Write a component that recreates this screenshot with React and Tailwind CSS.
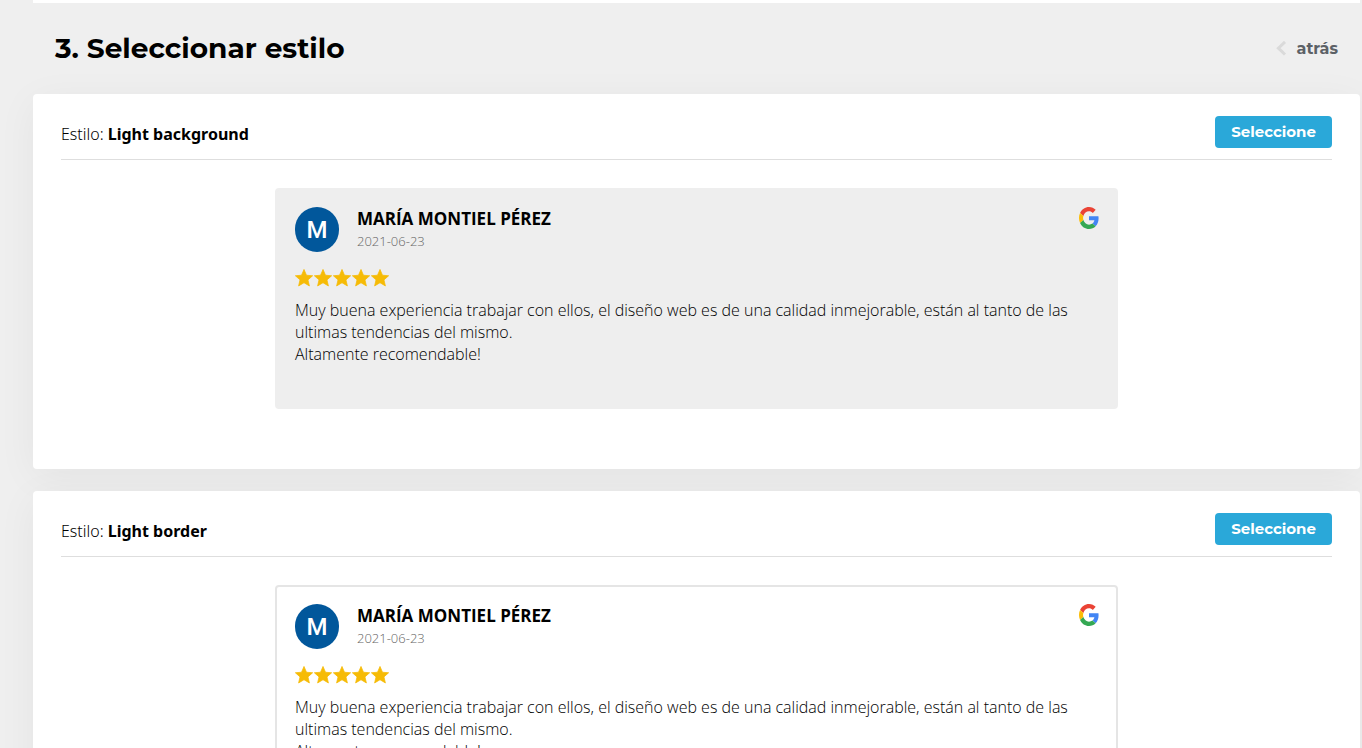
import React from 'react';

const STYLES = [
  { id: 'light-background', name: 'Light background', box: 'bg-[#eeeeee] border-[#eeeeee]' },
  { id: 'light-border', name: 'Light border', box: 'bg-white border-[#e5e5e5]' },
];

const REVIEW = {
  user: 'MARÍA MONTIEL PÉREZ',
  date: '2021-06-23',
  rating: 5,
  lines: [
    'Muy buena experiencia trabajar con ellos, el diseño web es de una calidad inmejorable, están al tanto de las ultimas tendencias del mismo.',
    'Altamente recomendable!',
  ],
};

const GoogleIcon = () => (
  <svg viewBox="0 0 48 48" className="w-5 h-[22px]" preserveAspectRatio="none" role="img" aria-label="Google">
    <path fill="#EA4335" d="M24 9.5c3.54 0 6.71 1.22 9.21 3.6l6.85-6.85C35.9 2.38 30.47 0 24 0 14.62 0 6.51 5.38 2.56 13.22l7.98 6.19C12.43 13.72 17.74 9.5 24 9.5z" />
    <path fill="#4285F4" d="M46.98 24.55c0-1.57-.15-3.09-.38-4.55H24v9.02h12.94c-.58 2.96-2.26 5.48-4.78 7.18l7.73 6c4.51-4.18 7.09-10.36 7.09-17.65z" />
    <path fill="#FBBC05" d="M10.53 28.59c-.48-1.45-.76-2.99-.76-4.59s.27-3.14.76-4.59l-7.98-6.19C.92 16.46 0 20.12 0 24c0 3.88.92 7.54 2.56 10.78l7.97-6.19z" />
    <path fill="#34A853" d="M24 48c6.48 0 11.93-2.13 15.89-5.81l-7.73-6c-2.15 1.45-4.92 2.3-8.16 2.3-6.26 0-11.57-4.22-13.47-9.91l-7.98 6.19C6.51 42.62 14.62 48 24 48z" />
  </svg>
);

const Star = () => (
  <svg viewBox="0 0 24 24" className="w-[18px] h-[18px]" aria-hidden="true">
    <path
      fill="#f6bb06"
      stroke="#f6bb06"
      strokeWidth="1"
      strokeLinejoin="round"
      d="M12 .6l3.3 7.7 8.2.7-6.2 5.5 1.9 8.1L12 18.3l-7.2 4.3 1.9-8.1L.5 9l8.2-.7z"
    />
  </svg>
);

const BackIcon = () => (
  <svg viewBox="0 0 12 16" className="w-3 h-4" aria-hidden="true">
    <path d="M10 .9L3.4 7.2l6.6 6.3" fill="none" stroke="#dadada" strokeWidth="3" />
  </svg>
);

const ReviewBox = ({ review, box }) => (
  <div className={`w-full max-w-[843px] min-h-[221px] mx-auto px-[17px] py-[17px] border-2 rounded-[4px] ${box}`}>
    {/* Reviewer */}
    <div className="flex items-start pl-px">
      <div className="w-11 h-[45px] shrink-0 rounded-full bg-[#01579b] text-white text-2xl font-medium font-['Roboto',sans-serif] flex items-center justify-center">
        M
      </div>
      <div className="flex-1 ml-[18px]">
        <div className="text-[17px] leading-6 font-bold text-black">{review.user}</div>
        <div className="text-[13px] leading-5 font-light text-[#666666]">{review.date}</div>
      </div>
      <GoogleIcon />
    </div>

    {/* Rating */}
    <div className="flex gap-px pl-px mt-[17px]" role="img" aria-label={`${review.rating}/5`}>
      {Array.from({ length: review.rating }, (_, i) => (
        <Star key={i} />
      ))}
    </div>

    <div className="pl-px mt-3 text-base leading-[22px] font-light text-black">
      {review.lines.map((line) => (
        <p key={line}>{line}</p>
      ))}
    </div>
  </div>
);

const StyleCard = ({ item }) => (
  <section className="bg-white rounded-[4px] shadow-[0_8px_40px_rgba(0,0,0,0.05)] px-7 pt-[22px] pb-[60px]">
    <div className="flex items-end justify-between pb-[11px] border-b border-[#dedede]">
      <h2 className="text-base leading-7 font-light font-['Noto_Sans',sans-serif] text-black">
        Estilo: <strong className="font-bold">{item.name}</strong>
      </h2>
      <button
        type="button"
        className="h-8 px-4 rounded-[4px] bg-[#2aa8d9] text-white text-[15px] font-bold font-['Montserrat','Inter',sans-serif]"
      >
        Seleccione
      </button>
    </div>
    <div className="mt-7">
      <ReviewBox review={REVIEW} box={item.box} />
    </div>
  </section>
);

const App = () => {
  return (
    <div className="h-screen overflow-hidden bg-[#efefef] pl-[33px] pr-0.5 font-['Open_Sans',sans-serif]">
      <div className="h-[3px] bg-white" />

      {/* Header */}
      <header className="flex items-center justify-between h-[91px] px-[22px] font-['Montserrat','Inter',sans-serif]">
        <h1 className="pb-0.5 text-[28px] font-bold text-black">3. Seleccionar estilo</h1>
        <a href="#" className="flex items-center gap-[10px] text-base font-bold text-[#5c6166]">
          <BackIcon />
          atrás
        </a>
      </header>

      <main className="flex flex-col gap-[22px]">
        {STYLES.map((item) => (
          <StyleCard key={item.id} item={item} />
        ))}
      </main>
    </div>
  );
};

export default App;
